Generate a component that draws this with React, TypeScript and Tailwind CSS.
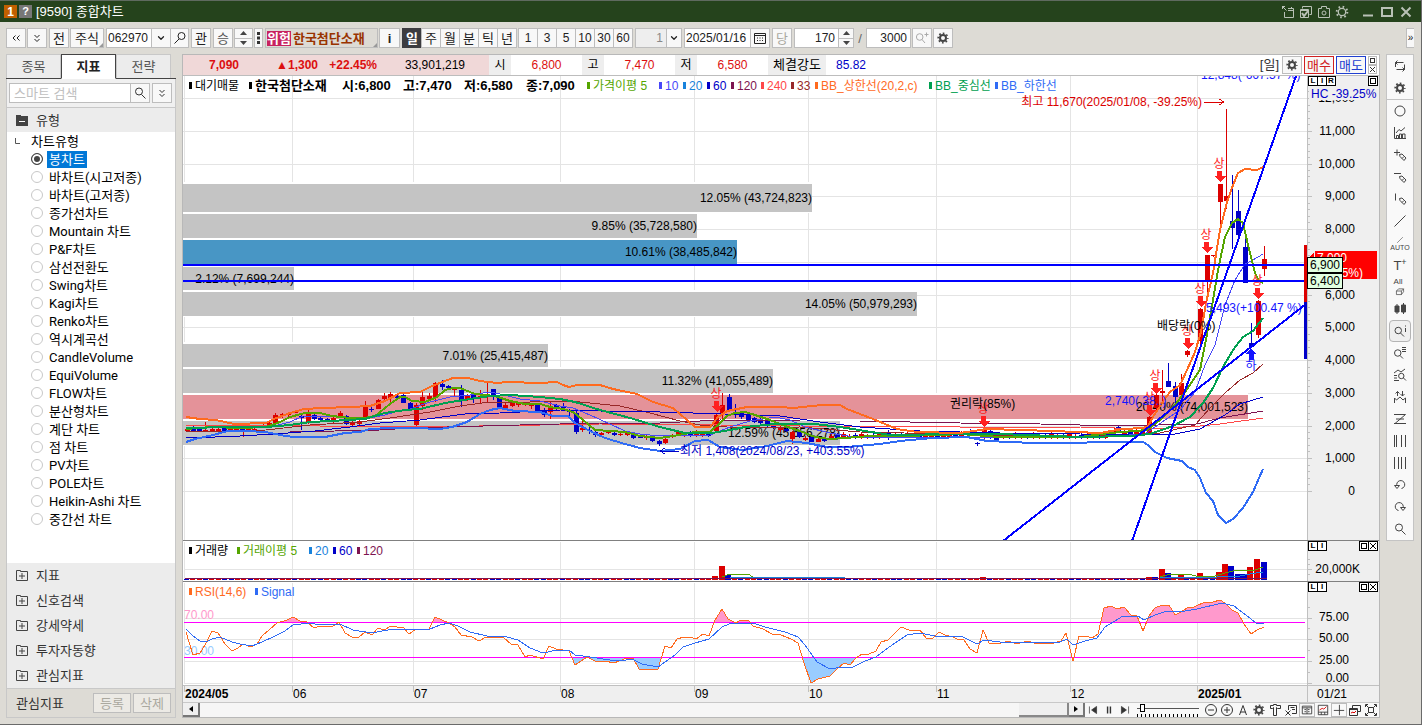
import type { ReactNode } from 'react'
import { ChevronDown } from 'lucide-react'
import { clsx } from 'clsx'

const RED = '#dc0000'
const NAVY = '#0000c8'

const chartTypes = [
  '봉차트', '바차트(시고저종)', '바차트(고저종)', '종가선차트', 'Mountain 차트', 'P&F차트', '삼선전환도',
  'Swing차트', 'Kagi차트', 'Renko차트', '역시계곡선', 'CandleVolume', 'EquiVolume', 'FLOW차트',
  '분산형차트', '계단 차트', '점 차트', 'PV차트', 'POLE차트', 'Heikin-Ashi 차트', '중간선 차트',
]

const monthLines = [184, 292, 413, 560, 694, 808, 936, 1070, 1197]

// volume profile: y, height, right edge, label, fill
const profile: [number, number, number, string, string][] = [
  [184, 28, 812, '12.05% (43,724,823)', '#c4c4c4'],
  [214, 24, 697, '9.85% (35,728,580)', '#c4c4c4'],
  [240, 24, 737, '10.61% (38,485,842)', '#4896c5'],
  [267, 23, 294, '2.12% (7,699,244)', '#c4c4c4'],
  [292, 24, 917, '14.05% (50,979,293)', '#c4c4c4'],
  [344, 23, 548, '7.01% (25,415,487)', '#c4c4c4'],
  [369, 24, 773, '11.32% (41,055,489)', '#c4c4c4'],
  [395, 24, 1248, '20.40% (74,001,523)', '#e49299'],
  [421, 24, 840, '12.59% (45,656,278)', '#c4c4c4'],
]

// candles: x, high, low, body top, body bottom, 1 = up / 0 = down
const candles: number[][] = [
  [199, 428, 432, 429, 431, 0], [205, 422, 432, 430, 432, 1], [212, 428, 431, 429, 431, 1], [243, 430, 437, 431, 432, 1],
  [263, 424, 428, 425, 427, 1], [269, 420, 427, 423, 426, 1], [275, 413, 426, 415, 424, 1], [282, 413, 418, 414, 416, 1],
  [288, 412, 418, 413, 415, 1], [295, 410, 413, 411, 413, 1], [301, 414, 430, 416, 418, 0], [308, 409, 424, 414, 422, 1],
  [314, 414, 420, 415, 419, 0], [320, 417, 421, 418, 420, 0], [327, 418, 422, 419, 421, 0], [333, 417, 423, 418, 422, 1],
  [340, 411, 417, 413, 416, 1], [346, 415, 425, 416, 424, 0], [352, 420, 427, 422, 425, 1], [359, 419, 426, 421, 424, 1],
  [365, 401, 420, 406, 419, 1], [371, 406, 412, 409, 410, 0], [378, 399, 409, 400, 409, 1], [384, 393, 401, 396, 399, 1],
  [390, 392, 402, 394, 398, 1], [397, 395, 399, 396, 398, 0], [403, 394, 403, 395, 403, 0], [410, 402, 410, 403, 409, 0],
  [416, 403, 427, 405, 425, 1], [422, 391, 410, 397, 406, 1], [429, 393, 401, 396, 399, 1], [435, 382, 402, 383, 398, 1],
  [442, 380, 390, 384, 387, 0], [448, 385, 389, 386, 388, 0], [454, 388, 397, 389, 390, 1], [461, 385, 407, 390, 400, 0],
  [467, 394, 401, 395, 400, 1], [473, 393, 403, 395, 398, 0], [480, 390, 404, 396, 398, 1], [487, 383, 402, 395, 397, 1],
  [493, 389, 400, 389, 396, 0], [499, 397, 409, 398, 408, 0], [505, 403, 408, 405, 408, 1], [512, 402, 407, 403, 406, 1],
  [518, 402, 407, 403, 405, 1], [525, 402, 406, 403, 405, 1], [531, 403, 409, 404, 406, 1], [537, 404, 412, 405, 411, 0],
  [544, 408, 417, 410, 415, 0], [550, 402, 419, 407, 412, 1], [556, 404, 411, 405, 409, 0], [563, 403, 410, 406, 408, 0],
  [569, 409, 416, 410, 412, 0], [576, 411, 434, 413, 432, 0], [582, 421, 432, 428, 430, 1], [589, 426, 434, 430, 431, 0],
  [595, 429, 437, 432, 435, 0], [601, 432, 436, 433, 435, 1], [608, 431, 434, 431, 433, 1], [614, 432, 436, 433, 435, 0],
  [620, 433, 436, 434, 435, 1], [627, 432, 436, 433, 435, 1], [633, 434, 439, 435, 438, 0], [640, 436, 438, 437, 438, 0],
  [646, 434, 440, 437, 438, 1], [652, 437, 442, 438, 441, 0], [659, 440, 446, 441, 444, 0], [665, 438, 444, 439, 443, 1],
  [672, 434, 438, 435, 437, 1], [678, 430, 436, 432, 435, 1],
  [716, 414, 432, 415, 431, 1], [722, 393, 421, 405, 414, 1], [729, 394, 411, 397, 410, 0], [735, 404, 418, 412, 415, 0],
  [741, 412, 419, 413, 417, 0], [748, 413, 422, 415, 420, 0], [754, 417, 423, 418, 422, 0], [760, 418, 425, 420, 423, 0],
  [767, 420, 427, 421, 425, 0], [773, 423, 429, 424, 427, 0], [780, 425, 432, 427, 430, 1], [786, 427, 432, 429, 431, 0],
  [792, 431, 444, 432, 439, 1], [799, 431, 438, 432, 437, 0], [805, 436, 441, 438, 440, 1], [811, 435, 442, 437, 442, 0],
  [818, 438, 442, 439, 442, 1], [824, 438, 442, 439, 441, 0],
  [888, 430, 440, 433, 437, 0], [970, 429, 436, 431, 434, 0], [977, 442, 446, 443, 444, 0], [984, 427, 439, 429, 438, 1],
  [990, 430, 439, 431, 438, 0], [996, 436, 441, 437, 440, 0], [1114, 428, 434, 430, 433, 1], [1118, 426, 433, 427, 431, 0],
  [1149, 416, 434, 417, 434, 1], [1156, 394, 410, 395, 408, 1], [1162, 370, 402, 391, 393, 1], [1168, 363, 387, 381, 387, 0],
  [1175, 382, 405, 386, 397, 0], [1181, 374, 397, 383, 395, 1], [1187, 350, 357, 351, 355, 1], [1200, 308, 345, 309, 341, 1],
  [1207, 255, 292, 255, 281, 1], [1213, 255, 257, 255, 256, 1], [1220, 184, 225, 184, 202, 1], [1226, 109, 209, 196, 201, 1],
  [1232, 175, 249, 221, 228, 0], [1238, 190, 240, 211, 235, 0], [1245, 239, 283, 247, 283, 0], [1251, 323, 347, 343, 347, 0],
  [1258, 300, 338, 301, 335, 1], [1264, 246, 276, 259, 269, 1],
]

// quiet stretches where the bars barely move
const quiet: [number, number, number][] = [[187, 194, 429], [218, 258, 429], [684, 710, 434], [831, 884, 436], [895, 966, 435], [1003, 1108, 436], [1124, 1146, 432]]
quiet.forEach(([from, to, y]) => {
  for (let x = from, i = 0; x <= to; x += 6, i++) {
    const d = (i * 7) % 3
    candles.push([x, y - 2 - d, y + 3, y - d, y + 2, i % 3 === 1 ? 0 : 1])
  }
})

// stroke, width, points
const averages: [string, number, string][] = [
  ['#ff4848', 1, '186,425 320,426 420,427 600,424 720,425 800,426 960,427 1080,427 1150,429 1200,426 1220,424 1263,418'],
  ['#7d1450', 1, '290,432 380,430 410,428 520,425 600,423 660,423 720,420 800,421 860,421 960,423 1040,424 1120,426 1197,424 1220,418 1263,411'],
  ['#982828', 1, '186,432 266,430 310,425 360,422 390,418 430,412 460,406 490,402 530,402 570,401 620,406 650,413 680,421 700,425 740,428 800,427 860,432 1080,437 1160,433 1195,425 1210,408 1225,393 1240,380 1253,373 1263,364'],
  ['#0000c8', 1, '186,437 215,437 240,436 275,434 315,431 350,427 380,423 420,420 465,414 500,413 560,410 600,411 660,412 725,414 780,416 820,422 860,427 920,431 1000,433 1080,434 1140,435 1175,434 1200,429 1225,415 1240,404 1263,397'],
  ['#4848f8', 1, '186,427 266,428 290,422 303,416 340,417 370,418 385,415 395,412 410,409 430,402 450,397 470,395 490,392 500,394 520,399 540,401 560,406 573,408 590,415 610,424 625,431 640,434 660,436 710,435 730,427 750,421 775,417 790,420 805,427 830,433 860,438 890,437 960,437 1080,438 1145,434 1165,420 1180,410 1195,392 1205,365 1215,345 1225,305 1235,280 1245,264 1253,260 1263,254'],
  ['#55a500', 2, '186,429 212,427 240,428 266,427 280,422 290,417 305,413 320,413 332,416 350,418 365,418 375,416 390,404 400,397 405,397 412,401 425,402 437,397 445,390 453,388 460,388 475,394 495,396 510,401 525,404 540,404 550,407 563,409 573,412 582,419 595,430 625,432 640,436 660,438 673,436 695,432 710,432 720,423 727,416 735,413 745,412 755,415 770,420 785,426 800,431 815,437 830,439 845,438 870,436 900,436 940,435 960,434 1000,437 1040,437 1080,437 1110,433 1147,430 1160,420 1175,405 1185,392 1200,370 1206,340 1213,300 1218,270 1225,237 1232,223 1238,219 1243,223 1248,245 1255,273 1259,281 1263,283'],
  ['#00a050', 2, '186,428 230,427 266,427 290,425 310,422 330,421 365,419 385,413 405,410 420,409 445,403 470,399 490,396 510,395 540,397 560,399 575,402 600,410 630,418 640,421 660,427 685,433 712,433 730,430 745,427 775,424 815,424 840,427 865,431 890,435 960,434 1000,434 1080,437 1130,436 1150,434 1173,426 1190,417 1203,403 1213,388 1223,367 1233,350 1243,337 1253,331 1263,318'],
  ['#ff6a1e', 2, '186,417 200,419 216,420 234,424 266,423 274,419 290,413 304,409 322,408 350,407 370,406 385,401 400,393 420,392 430,387 442,382 453,378 468,378 480,381 497,383 508,382 540,383 557,382 563,385 569,387 577,385 600,385 613,389 637,394 653,402 673,408 687,420 695,427 710,427 718,417 727,411 747,407 780,407 793,408 822,405 840,405 847,409 873,419 897,429 917,432 960,433 987,429 1053,431 1100,433 1123,429 1143,428 1148,426 1153,417 1162,403 1170,392 1180,385 1187,370 1195,352 1201,332 1206,303 1213,273 1220,230 1227,202 1233,185 1238,173 1245,169 1257,170 1263,167'],
  ['#2f6bf5', 2, '186,442 195,439 213,435 228,431 245,431 266,432 280,435 293,437 325,437 345,433 360,432 370,429 390,428 415,428 440,429 452,427 467,422 480,414 490,410 500,408 515,411 540,412 553,416 568,416 575,423 590,431 605,438 625,444 640,448 660,451 680,449 695,441 708,440 720,447 743,450 767,446 787,441 807,443 827,447 847,447 880,444 900,441 933,438 967,437 987,441 1033,443 1143,442 1148,445 1155,452 1167,458 1182,461 1188,467 1195,470 1200,478 1206,493 1213,501 1218,515 1226,523 1233,519 1243,508 1253,492 1263,469'],
]

const rsi =
  '186,632 193,655 200,653 205,645 212,631 218,633 225,644 232,651 238,648 243,644 251,647 257,644 262,636 270,629 277,623 287,620 293,617 300,621 307,622 314,628 320,626 326,627 333,626 339,622 345,633 352,637 359,637 365,632 372,635 378,628 384,630 391,626 397,627 403,627 409,634 416,629 429,629 435,617 442,620 449,623 455,627 461,635 472,637 479,641 486,637 496,637 504,638 511,644 518,645 525,657 530,655 543,659 549,646 556,649 569,651 575,665 587,657 595,661 605,661 614,663 627,658 633,658 639,669 658,669 665,646 671,648 677,639 684,637 690,637 696,639 703,634 709,636 715,620 722,609 728,619 736,623 741,620 749,621 753,626 763,629 772,634 781,635 791,639 798,643 804,663 811,683 818,679 830,676 837,669 844,663 850,665 856,658 862,654 869,654 876,651 881,642 888,640 901,627 909,630 920,630 926,638 932,639 939,632 945,635 953,637 957,639 964,640 970,649 977,653 983,630 989,643 997,644 1009,641 1016,644 1028,641 1034,643 1054,643 1061,641 1066,633 1073,661 1079,636 1086,636 1092,638 1098,634 1104,608 1111,606 1117,609 1124,607 1131,615 1137,616 1143,631 1149,616 1155,608 1162,605 1169,605 1175,615 1181,612 1187,608 1194,607 1205,602 1213,602 1220,600 1225,603 1232,610 1238,613 1244,624 1251,634 1257,630 1264,627'
const signal =
  '186,629 193,636 200,641 206,642 212,639 220,637 232,642 240,644 252,646 262,642 275,636 285,631 293,625 310,623 320,625 340,624 353,630 372,633 382,631 395,629 403,629 415,630 430,629 440,625 449,623 458,626 470,632 487,636 507,637 518,640 530,648 543,653 557,650 569,650 575,655 590,657 610,660 620,661 632,659 642,664 658,667 665,662 675,655 683,647 695,643 709,639 722,627 729,624 753,623 765,627 785,632 798,637 805,645 817,662 830,669 842,667 853,667 865,661 876,657 885,650 895,643 907,635 920,633 935,636 950,636 963,637 977,644 984,640 1000,642 1060,642 1067,639 1073,645 1085,641 1097,638 1105,627 1123,616 1138,616 1144,620 1155,615 1167,611 1185,611 1197,609 1222,603 1234,606 1246,615 1256,623 1264,623'

// x, top, 1 = up / 0 = down
const volumes: number[][] = [
  [715, 576, 1], [722, 566, 1], [728, 575, 0], [983, 577, 1], [1149, 577, 1], [1155, 577, 0], [1162, 569, 1], [1168, 573, 0],
  [1181, 575, 1], [1200, 573, 1], [1219, 572, 1], [1225, 564, 1], [1231, 566, 0], [1238, 574, 0], [1244, 574, 0],
  [1250, 567, 1], [1257, 559, 1], [1264, 562, 0],
]

const limitUps: [number, number][] = [[716, 401], [983, 416], [1149, 405], [1155, 383], [1187, 338], [1200, 296], [1206, 242], [1219, 171], [1257, 288]]

/* ---------- icons ---------- */

function Icon({ d, size = 14, sw = 1, fill = 'none', children }: { d?: string; size?: number; sw?: number; fill?: string; children?: ReactNode }) {
  return (
    <svg width={size} height={size} viewBox="0 0 14 14" fill={fill} stroke="currentColor" strokeWidth={sw} className="shrink-0" aria-hidden="true">
      {d && <path d={d} />}
      {children}
    </svg>
  )
}

function Gear() {
  return (
    <span className="text-[#444]">
      <Icon>
        <circle cx="7" cy="7" r="3" strokeWidth="2" />
        <circle cx="7" cy="7" r="4.800" strokeWidth="1.600" strokeDasharray="1.700 2.070" strokeDashoffset="0.850" />
      </Icon>
    </span>
  )
}

const ICONS = {
  search: 'M9.5 5.5a3.5 3.5 0 1 1-7 0a3.5 3.5 0 0 1 7 0M8.5 8.5L12.5 12.5',
  searchFlip: 'M12 5a3.5 3.5 0 1 1-7 0a3.5 3.5 0 0 1 7 0M6 8L1.5 12.5',
  dbLeft: 'M6.5 4.5L4 7l2.5 2.5M10.5 4.5L8 7l2.5 2.5',
  dbDown: 'M4.5 4L7 6.5L9.5 4M4.5 8L7 10.5L9.5 8',
  pencil: 'M6.5 6.5l2.500-.5l4 4l-2 2.500l-4-4zM9 10.500l2-2',
}

const sideTools: ReactNode[] = [
  <Icon><circle cx="7" cy="7" r="5" /></Icon>,
  <Icon d="M1.500 1v11.500H13M3.500 12V9.500h2V12M6.500 12V8h2v4M9.500 12V8h2.500v4M3 7l3-3.500l2 1.500l4-3.500" />,
  <Icon d={'M1 4.500h6M4 1.500v6' + ICONS.pencil} />,
  <Icon d={'M1 3.500h7' + ICONS.pencil} />,
  <Icon d={'M2.500 1.500v7' + ICONS.pencil} />,
  <Icon d="M1.500 12.500L12.500 1.500" />,
  <span className="flex flex-col items-center text-[7px] leading-[7px]"><Icon size={8} d="M2 12L12 2" />AUTO</span>,
  <span className="text-[13px] leading-none">T<sup className="text-[9px]">+</sup></span>,
  <span className="flex flex-col items-center text-[8px] leading-[8px]"><span className="mr-1">All</span><Icon size={10} d="M2 7h7v5H2zM2 7l3-3h7L9 7M12 4v4l-3 4" /></span>,
  <Icon d="M4 2v10M10.500 1v11"><path d="M2 4h4v6H2zM8.500 3h4v7h-4z" fill="currentColor" /></Icon>,
  <Icon d="M8.500 6.500a3.200 3.200 0 1 1-6.500 0a3.200 3.200 0 0 1 6.500 0M7.500 9L11 12.500M12.500 4v4M12.500 1.500v1" />,
  <Icon d="M8 7a3.200 3.200 0 1 1-6.500 0a3.200 3.200 0 0 1 6.500 0M7 9.500L10 12.500M9 1.500h4M9 3.500h4M9 5.500h4" />,
  <Icon d="M1 5l4-3l3 2l4-3M1 7.500h3M1 10h3M1 12.500h5M11 8a2.700 2.700 0 1 1-5.400 0a2.700 2.700 0 0 1 5.400 0M10.500 10L13 12.500" />,
  <Icon d="M1.500 13V8l2 2l3.500-3l3 3l2.500-2v5M4.500 6V1.500M2.500 3.500l2-2l2 2M9.500 1v5M7.500 4l2 2l2-2" />,
  <Icon d="M1 2.500h11.500L2 11.500M3 7h8M1 11.500h12" />,
  <Icon d="M1.500 1v12M3.500 1v12M8.500 1v12M12.500 1v12" />,
  <Icon d="M1.500 1v12M5.500 1v12M8.500 1v12M12.500 1v12" />,
  <Icon d="M4 8A4 4 0 1 1 8.500 10.500M1.500 7.500h5L4 10.500z" />,
  <Icon d="M10 8A4 4 0 1 0 5.500 10.500M7.500 7.500h5L10 10.500z" />,
  <Icon d={ICONS.search} />,
]

/* ---------- shared bits ---------- */

function Btn({ className, children, label }: { className?: string; children?: ReactNode; label?: string }) {
  return (
    <button type="button" aria-label={label} className={clsx('flex h-5 shrink-0 items-center justify-center overflow-hidden border border-[#bdbdbd] bg-[#f8f8f8] text-[13px] leading-none', className)}>
      {children}
    </button>
  )
}

function Field({ label, value, className }: { label: string; value: string; className?: string }) {
  return <input type="text" aria-label={label} defaultValue={value} className={clsx('h-5 min-w-0 shrink-0 border border-[#bdbdbd] px-[3px] text-[12px] leading-none outline-none', className)} />
}

function Spinner({ className }: { className?: string }) {
  return (
    <div className={clsx('flex h-5 shrink-0 flex-col border border-[#bdbdbd] bg-[#f8f8f8]', className)}>
      <button type="button" aria-label="증가" className="flex flex-1 items-center justify-center border-b border-[#bdbdbd]">
        <svg width="7" height="4"><path d="M0 4L3.500 0L7 4z" fill="#444" /></svg>
      </button>
      <button type="button" aria-label="감소" className="flex flex-1 items-center justify-center">
        <svg width="7" height="4"><path d="M0 0L3.500 4L7 0z" fill="#444" /></svg>
      </button>
    </div>
  )
}

// grey notch in the corner of buttons that open a menu
function MenuCorner() {
  return <svg width="4" height="4" className="shrink-0 self-end"><path d="M4 0v4H0z" fill="#999" /></svg>
}

function Legend({ x, y, color, text, bold }: { x: number; y: number; color: string; text: string; bold?: boolean }) {
  return (
    <g fill={color}>
      <rect x={x - 6} y={y - 4} width="3" height="7" />
      <text x={x} y={y + 4} fontSize={bold ? 13 : 12} fontWeight={bold ? 700 : 400}>{text}</text>
    </g>
  )
}

function PaneButtons({ tags, close }: { tags: string[]; close?: boolean }) {
  const box = 'flex h-[10px] w-[10px] items-center justify-center border border-black bg-white text-[8px] leading-none font-bold -ml-px'
  return (
    <div className="absolute top-0 right-0 flex w-[72px] justify-between pr-px pl-[2px]">
      <div className="flex">
        {tags.map(t => <button key={t} type="button" className={box}>{t}</button>)}
      </div>
      <div className="flex">
        <button type="button" aria-label="최대화" className={box}><span className="h-[6px] w-[6px] border border-black" /></button>
        {close && <button type="button" aria-label="닫기" className={box}><svg width="8" height="8" stroke="#000"><path d="M1 1l6 6M7 1l-6 6" /></svg></button>}
      </div>
    </div>
  )
}

/* ---------- title + toolbar ---------- */

function TitleBar() {
  return (
    <header className="flex h-[22px] items-center border-t border-[#5f6a5f] bg-[#25431c] pr-[8px] pl-1 text-white">
      <span className="flex h-[13px] w-[13px] items-center justify-center bg-[#c06000] text-[12px] leading-none font-bold">1</span>
      <span className="ml-[2px] flex h-[13px] w-[13px] items-center justify-center bg-[#777] text-[11px] leading-none font-bold">?</span>
      <h1 className="ml-1 text-[13px] leading-none">[9590] 종합차트</h1>
      <div className="ml-auto flex items-center gap-1 text-[#b9c1b6]">
        <button type="button" aria-label="창 분리"><Icon d="M1 1.500h3M1.500 1v3M1.500 1.500l4 4M3.500 7v5.500h9V3.500H7M7 5.500h5.500M10.500 2v2" /></button>
        <button type="button" aria-label="복사"><Icon d="M3.500 3.500v-2h9v8h-2M1.500 4.500h8v8h-8zM1.500 5.500h8"><path d="M3 8l2 3l4-5" strokeWidth="2" /></Icon></button>
        <button type="button" aria-label="캡처"><Icon d="M1.500 3.500h3v-2h5v2h3v9h-11zM9 8a2 2 0 1 1-4 0a2 2 0 0 1 4 0" /></button>
        <button type="button" aria-label="설정"><Icon><circle cx="7" cy="7" r="3.700" strokeWidth="1.300" /><circle cx="7" cy="7" r="5.300" strokeWidth="2" strokeDasharray="1.600 2.560" /></Icon></button>
        <button type="button" aria-label="최소화" className="ml-2"><Icon><path d="M2 10.500h10" strokeWidth="2" /></Icon></button>
        <button type="button" aria-label="최대화" className="ml-px"><Icon><path d="M2 3h10v8H2z" strokeWidth="2" /></Icon></button>
        <button type="button" aria-label="닫기" className="ml-px"><Icon><path d="M2.500 2.500l9 9M11.500 2.500l-9 9" strokeWidth="2" /></Icon></button>
      </div>
    </header>
  )
}

function Toolbar() {
  return (
    <div className="flex h-8 items-center gap-[2px] overflow-hidden pr-[7px] pl-[6px] text-[#222]">
      <div className="flex gap-px">
        <Btn className="w-5" label="이전"><Icon d={ICONS.dbLeft} /></Btn>
        <Btn className="w-5" label="펼치기"><Icon d={ICONS.dbDown} /></Btn>
      </div>
      <div className="flex gap-px">
        <Btn className="w-5">전</Btn>
        <Btn className="w-[34px] justify-end!">주식<MenuCorner /></Btn>
      </div>
      <div className="flex">
        <Field label="종목코드" value="062970" className="w-[46px] bg-white px-px!" />
        <Btn className="-ml-px w-5" label="목록"><ChevronDown size={10} strokeWidth={3} /></Btn>
        <Btn className="-ml-px w-[19px]" label="종목 찾기"><Icon d={ICONS.searchFlip} /></Btn>
      </div>
      <Btn className="w-5">관</Btn>
      <div className="flex gap-px">
        <Btn className="w-5 text-[#555]">승</Btn>
        <Spinner className="w-[19px]" />
        <Btn className="w-[9px]" label="더보기"><svg width="3" height="12"><path d="M0 0h3v3H0zM0 4.500h3v3H0zM0 9h3v3H0z" fill="#333" /></svg></Btn>
      </div>
      <div className="flex gap-px">
        <Btn className="w-[113px] justify-start! bg-[#dddbd5]! pl-px font-bold">
          <span className="bg-[#c8215f] py-px text-white">위험</span>
          <span className="mr-auto ml-[2px] text-[#993300]">한국첨단소재</span>
          <MenuCorner />
        </Btn>
        <Btn className="w-[21px] font-bold">i</Btn>
      </div>
      <div className="flex gap-px">
        <div className="flex">
          {['일', '주', '월', '분', '틱', '년'].map((p, i) => (
            <Btn key={p} className={clsx('w-5', i === 0 ? 'border-[#3c3c40]! bg-[#3c3c40]! font-bold text-white' : '-ml-px')}>{p}</Btn>
          ))}
        </div>
        <div className="flex">
          {['1', '3', '5', '10', '30', '60'].map((p, i) => (
            <Btn key={p} className={clsx('w-5 text-[12px]!', i > 0 && '-ml-px')}>{p}</Btn>
          ))}
        </div>
      </div>
      <div className="flex">
        <Field label="주기" value="1" className="w-8 bg-[#eee] text-right text-[#888]" />
        <Btn className="-ml-px w-4" label="주기 목록"><ChevronDown size={10} strokeWidth={3} /></Btn>
      </div>
      <div className="flex">
        <Field label="날짜" value="2025/01/16" className="w-[67px] bg-white px-px!" />
        <Btn className="-ml-px w-5" label="달력"><Icon d="M1.500 2.500h11v10h-11zM1.500 4.500h11M4 7h1M6.500 7h1M9 7h1M4 9.500h1M6.500 9.500h1M9 9.500h1" /></Btn>
      </div>
      <Btn className="w-5 text-[#aaa89f]">당</Btn>
      <div className="flex items-center">
        <Field label="표시 봉수" value="170" className="w-[45px] bg-white text-right" />
        <Spinner className="-ml-px w-4" />
        <span className="w-3 text-center text-[13px] leading-none text-[#666]">/</span>
        <Field label="전체 봉수" value="3000" className="w-[45px] bg-white text-right" />
        <Btn className="ml-px w-5 text-[#aaa]" label="확대"><Icon d="M8 6a3.300 3.300 0 1 1-6.600 0a3.300 3.300 0 0 1 6.600 0M7 8.500L10 12M9.500 3.500h4M11.500 1.500v4" /></Btn>
        <Btn className="ml-px w-5" label="설정"><Gear /></Btn>
      </div>
      <Btn className="ml-auto w-2 border-r-0 text-[10px]!">»</Btn>
    </div>
  )
}

/* ---------- left panel ---------- */

function FolderIcon({ open }: { open?: boolean }) {
  return open ? (
    <svg width="12" height="11"><path d="M0 0h5v1h7v10H0z" fill="#444" /><path d="M3 6h6v1H3z" fill="#fff" /></svg>
  ) : (
    <svg width="12" height="11" fill="none" stroke="#444"><path d="M.5 .5h4v1h7v9h-11zM3 6h6M6 3v6" /></svg>
  )
}

function Sidebar() {
  return (
    <aside className="flex w-[170px] shrink-0 flex-col text-[13px] leading-none text-[#333]">
      <div className="flex h-[25px] border-b border-[#444] pr-[5px]" role="tablist">
        {['종목', '지표', '전략'].map((t, i) => (
          <button key={t} type="button" role="tab" aria-selected={i === 1}
            className={clsx('flex-1 border', i === 1 ? 'h-[25px] border-[#444] border-b-white bg-white font-bold text-[#222]' : 'h-6 border-[#c8c8c8] border-b-0 bg-[#ececec] text-[#555]')}>
            {t}
          </button>
        ))}
      </div>
      <div className="flex border-x border-[#c8c8c8] bg-[#f0f0f0] py-1 pl-[2px]">
        <input type="text" aria-label="스마트 검색" placeholder="스마트 검색" className="h-5 w-[122px] border border-[#bdbdbd] bg-white px-1 text-[13px] outline-none placeholder:text-[#c0c0c0]" />
        <Btn className="-ml-px w-5" label="검색"><Icon d={ICONS.search} /></Btn>
        <Btn className="ml-[2px] w-5" label="펼치기"><Icon d={ICONS.dbDown} /></Btn>
      </div>
      <div className="flex flex-1 flex-col border border-[#c8c8c8] bg-white">
        <button type="button" className="flex h-6 items-center gap-2 bg-[#ececec] pl-[9px]"><FolderIcon open />유형</button>
        <fieldset className="text-black [font-family:Roboto,'Noto_Sans_CJK_KR',sans-serif]">
          <legend className="flex h-[18px] items-center pl-2"><svg width="6" height="6" fill="none" stroke="#555" className="mr-[10px]"><path d="M.5 0v5.500H5" /></svg>차트유형</legend>
          {chartTypes.map((t, i) => (
            <label key={t} className="flex h-[18px] items-center gap-1 pl-6">
              <input type="radio" name="chartType" defaultChecked={i === 0}
                className="h-3 w-3 shrink-0 appearance-none rounded-full border border-[#c8c8c8] bg-white checked:border-[#444] checked:bg-[#444] checked:shadow-[inset_0_0_0_2px_#fff]" />
              <span className={clsx('flex h-[17px] items-center px-[2px]', i === 0 && 'bg-[#0078d7] text-white')}>{t}</span>
            </label>
          ))}
        </fieldset>
        <div className="mt-auto bg-[#ececec]">
          {['지표', '신호검색', '강세약세', '투자자동향', '관심지표'].map(t => (
            <button key={t} type="button" className="flex h-[25px] w-full items-center gap-2 pl-[9px]"><FolderIcon />{t}</button>
          ))}
        </div>
        <div className="flex h-[29px] items-center border-t border-[#c8c8c8] bg-[#dddbd5] pr-1 pl-[9px]">
          관심지표
          <Btn className="ml-auto w-[38px] bg-[#eceae5]! text-[#aaa89f]">등록</Btn>
          <Btn className="ml-[2px] w-[38px] bg-[#eceae5]! text-[#aaa89f]">삭제</Btn>
        </div>
      </div>
    </aside>
  )
}

/* ---------- charts ---------- */

function QuoteRow() {
  return (
    <div className="flex h-[21px] items-stretch overflow-hidden border-b border-[#bdbdbd] bg-white text-[12px] leading-5 whitespace-nowrap text-black">
      <div className="flex w-[306px] shrink-0 bg-[#f0d8d8] font-bold text-[#dc0f0f]">
        <span className="w-14 text-right">7,090</span>
        <span className="w-[79px] text-right">▲1,300</span>
        <span className="w-[59px] text-right">+22.45%</span>
        <span className="w-[88px] text-right font-normal text-black">33,901,219</span>
      </div>
      {[['시', '6,800'], ['고', '7,470'], ['저', '6,580']].map(([k, v]) => (
        <div key={k} className="flex shrink-0">
          <span className="w-[22px] bg-[#eee] text-center">{k}</span>
          <span className="w-[71px] text-center text-[#dc0f0f]">{v}</span>
        </div>
      ))}
      <span className="w-[58px] shrink-0 bg-[#eee] text-center text-[13px]">체결강도</span>
      <span className="ml-[10px] text-[#0000c8]">85.82</span>
      <div className="ml-auto flex items-center gap-[2px] pr-[2px]">
        <span className="mr-px text-[13px] text-[#333]">[일]</span>
        <Btn className="h-[18px]! w-5" label="차트 설정"><Gear /></Btn>
        <Btn className="h-[18px]! w-[30px] border-[#d02020]! text-[#d02020]">매수</Btn>
        <Btn className="h-[18px]! w-[30px] border-[#2040d0]! text-[#2040d0]">매도</Btn>
        <div className="flex flex-col">
          <button type="button" aria-label="확대" className="flex h-[9px] w-[9px] items-center justify-center border border-[#bbb]"><span className="h-[5px] w-[5px] border border-[#333]" /></button>
          <button type="button" aria-label="닫기" className="flex h-[9px] w-[9px] items-center justify-center border border-[#bbb]"><svg width="5" height="5" stroke="#333"><path d="M0 0l5 5M5 0L0 5" /></svg></button>
        </div>
      </div>
    </div>
  )
}

function AxisColumn({ top, height }: { top: number; height: number }) {
  return (
    <g>
      <rect x="1307" y={top} width="72" height={height} fill="#efefef" />
      <rect x="1307" y={top} width="1" height={height} fill="#c0c0c0" />
    </g>
  )
}

function PriceChart() {
  const ticks = Array.from({ length: 13 }, (_, k) => ({ v: k * 1000, y: Math.round(491 - k * 32.75) }))
  return (
    <section className="relative">
      <svg viewBox="183 76 1196 464" className="block w-full" fontSize="12" shapeRendering="crispEdges">
        <rect x="183" y="76" width="1124" height="464" fill="#fff" />
        {monthLines.map(x => <rect key={x} x={x} y="76" width="1" height="464" fill="#e4e4e4" />)}
        {ticks.map(t => <rect key={t.v} x="183" y={t.y} width="1124" height="1" fill="#e4e4e4" />)}
        {profile.map(([y, h, r, , fill]) => (
          <g key={y}>
            <rect x="183" y={y - 2} width={r - 183} height={h + 3} fill="#fff" />
            <rect x="183" y={y} width={r - 183} height={h} fill={fill} />
          </g>
        ))}
        {profile.map(([y, h, r, label]) => <text key={y} x={r} y={y + h / 2 + 4} textAnchor="end">{label}</text>)}
        {candles.map(([x, hi, lo, top, bot, up], i) => (
          <g key={i} fill={up ? RED : NAVY}>
            <rect x={x} y={hi} width="1" height={lo - hi} />
            <rect x={x - 2} y={top} width="5" height={Math.max(1, bot - top)} />
          </g>
        ))}
        {averages.map(([stroke, w, points]) => <polyline key={stroke} points={points} fill="none" stroke={stroke} strokeWidth={w} />)}

        <g fill="#ff2020">
          {limitUps.map(([x, y]) => (
            <g key={x}>
              <path d={`M${x - 2} ${y}h5v5h4l-6 6l-6-6h3z`} />
              <text x={x} y={y - 3} textAnchor="middle">상</text>
            </g>
          ))}
        </g>
        <g fill="#1414ff">
          <path d="M1251 349l6 5h-3v6h-5v-6h-4z" />
          <text x="1251" y="370" textAnchor="middle">하</text>
          <text x="1201" y="79">12,848(-667.57 %)</text>
          <text x="1206" y="312">5,493(+100.47 %)</text>
          <text x="1105" y="405">2,740( 38..)</text>
        </g>
        <text x="950" y="408">권리락(85%)</text>
        <text x="1157" y="330">배당락(0%)</text>
        <text x="1202" y="106" fill="#dc0000" textAnchor="end">최고 11,670(2025/01/08, -39.25%)</text>
        <path d="M1204 102h20M1219 99l5 3l-5 3" stroke="#dc0000" fill="none" />
        <text x="680" y="455" fill={NAVY}>최저 1,408(2024/08/23, +403.55%)</text>
        <path d="M679 451h-19M665 448l-5 3l5 3" stroke={NAVY} fill="none" />

        <g stroke="#0000ff" strokeWidth="2">
          <path d="M183 265H1306M183 281H1306M1003 541L1306 304M1132 541L1296 76" />
        </g>
        <rect x="1304" y="245" width="3" height="57" fill={RED} />
        <rect x="1304" y="302" width="3" height="57" fill={NAVY} />

        <Legend x={195} y={86} color="#000" text="대기매물" />
        <Legend x={255} y={86} color="#000" text="한국첨단소재" bold />
        <g fontSize="13" fontWeight="700">
          <text x="342" y="90">시:6,800</text>
          <text x="403" y="90">고:7,470</text>
          <text x="464" y="90">저:6,580</text>
          <text x="526" y="90">종:7,090</text>
        </g>
        <Legend x={593} y={86} color="#55a500" text="가격이평 5" />
        <Legend x={665} y={86} color="#4848f8" text="10" />
        <Legend x={689} y={86} color="#1882dc" text="20" />
        <Legend x={713} y={86} color="#0000c8" text="60" />
        <Legend x={737} y={86} color="#7d1450" text="120" />
        <Legend x={767} y={86} color="#ff4848" text="240" />
        <Legend x={797} y={86} color="#982828" text="33" />
        <Legend x={821} y={86} color="#ff6a1e" text="BB_상한선(20,2,c)" />
        <Legend x={935} y={86} color="#00a050" text="BB_중심선" />
        <Legend x={1001} y={86} color="#2f6bf5" text="BB_하한선" />

        <AxisColumn top={76} height={464} />
        {ticks.map(t => (
          <g key={t.v}>
            {[0, 7, 13, 20, 26].map(o => <rect key={o} x="1308" y={t.y - o} width={o ? 2 : 4} height="1" fill="#c0c0c0" />)}
            <text x="1355" y={t.y + 4} textAnchor="end">{t.v.toLocaleString('en-US')}</text>
          </g>
        ))}
        <rect x="1309" y="85" width="68" height="15" fill="#efefef" />
        <text x="1311" y="98" fill={NAVY}>HC -39.25%</text>
        <rect x="1315" y="251" width="62" height="28" fill="#f00" />
        <path d="M1309 257l5-4v8z" fill="#f00" />
        <g fill="#fff">
          <text x="1317" y="262">7,090</text>
          <text x="1363" y="277" textAnchor="end">(22.45%)</text>
        </g>
        <g fill="#e1ffe1" stroke="#000">
          <rect x="1307.5" y="257.5" width="35" height="15" />
          <rect x="1307.5" y="273.5" width="35" height="15" />
        </g>
        <text x="1310" y="269">6,900</text>
        <text x="1310" y="285">6,400</text>
      </svg>
      <PaneButtons tags={['L', 'I', 'R']} />
    </section>
  )
}

function VolumeChart() {
  return (
    <section className="relative border-t border-[#808080]">
      <svg viewBox="183 541 1196 40" className="block w-full" fontSize="12" shapeRendering="crispEdges">
        <rect x="183" y="541" width="1124" height="40" fill="#fff" />
        {monthLines.map(x => <rect key={x} x={x} y="542" width="1" height="38" fill="#e4e4e4" />)}
        <rect x="184" y="569" width="1123" height="1" fill="#e4e4e4" />
        {Array.from({ length: 169 }, (_, i) => (
          <rect key={i} x={Math.round(184 + i * 6.37)} y="579" width="5" height="1" fill={(i * 5) % 7 < 3 ? NAVY : RED} />
        ))}
        {volumes.map(([x, y, up]) => <rect key={x} x={x - 3} y={y} width="6" height={580 - y} fill={up ? RED : NAVY} />)}
        <g fill="none">
          <path d="M722 577L730 574H748L753 577M1160 577L1170 574H1188L1200 577L1215 576L1225 573L1237 570H1255L1263 567" stroke="#55a500" />
          <path d="M730 577H845M1160 577H1217L1240 576L1250 574L1263 572" stroke="#1882dc" />
          <path d="M185 578.500H1267" stroke="#7d1450" />
        </g>
        <Legend x={195} y={551} color="#000" text="거래량" />
        <Legend x={243} y={551} color="#55a500" text="거래이평 5" />
        <Legend x={315} y={551} color="#1882dc" text="20" />
        <Legend x={339} y={551} color="#0000c8" text="60" />
        <Legend x={363} y={551} color="#7d1450" text="120" />
        <AxisColumn top={541} height={40} />
        <path d="M1308 559.500h2M1308 564.500h2M1308 569.500h4M1308 574.500h2" stroke="#c0c0c0" />
        <text x="1360" y="573" textAnchor="end">20,000K</text>
      </svg>
      <PaneButtons tags={['L', 'I']} close />
    </section>
  )
}

function RsiChart() {
  return (
    <section className="relative border-t border-[#808080]">
      <svg viewBox="183 582 1196 103" className="block w-full" fontSize="12" shapeRendering="crispEdges">
        <defs>
          <clipPath id="over"><rect x="183" y="582" width="1124" height="40" /></clipPath>
          <clipPath id="under"><rect x="183" y="658" width="1124" height="27" /></clipPath>
        </defs>
        <rect x="183" y="582" width="1124" height="103" fill="#fff" />
        {monthLines.map(x => <rect key={x} x={x} y="583" width="1" height="101" fill="#e4e4e4" />)}
        {[618, 639, 661, 683].map(y => <rect key={y} x="184" y={y} width="1123" height="1" fill="#e4e4e4" />)}
        <polygon points={`186,622 ${rsi} 1264,622`} fill="#ff99cc" clipPath="url(#over)" />
        <polygon points={`186,658 ${rsi} 1264,658`} fill="#99ccff" clipPath="url(#under)" />
        <text x="184" y="619" fill="#ff99cc">70.00</text>
        <text x="184" y="655" fill="#99ccff">30.00</text>
        <rect x="184" y="622" width="1121" height="1" fill="#f0f" />
        <rect x="184" y="657" width="1121" height="1" fill="#f0f" />
        <polyline points={rsi} fill="none" stroke="#ff6a1e" />
        <polyline points={signal} fill="none" stroke="#2f6bf5" />
        <Legend x={195} y={592} color="#ff6a1e" text="RSI(14,6)" />
        <Legend x={261} y={592} color="#2f6bf5" text="Signal" />
        <AxisColumn top={582} height={103} />
        {[['75.00', 617], ['50.00', 638], ['25.00', 660], ['0.00', 678]].map(([t, y]) => (
          <text key={t} x="1349" y={Number(y) + 4} textAnchor="end">{t}</text>
        ))}
        <path d="M1308 607.500h2M1308 618.500h4M1308 628.500h2M1308 639.500h4M1308 650.500h2M1308 661.500h4M1308 672.500h2M1308 683.500h4" stroke="#c0c0c0" />
      </svg>
      <PaneButtons tags={['L', 'I']} close />
    </section>
  )
}

function TimeAxis() {
  const labels: [number, string][] = [[185, '2024/05'], [293, '06'], [414, '07'], [561, '08'], [695, '09'], [809, '10'], [937, '11'], [1071, '12'], [1198, '2025/01']]
  return (
    <svg viewBox="183 685 1196 17" className="block w-full bg-[#efefef]" fontSize="12" shapeRendering="crispEdges">
      <rect x="183" y="685" width="1196" height="1" fill="#c0c0c0" />
      <rect x="1307" y="685" width="1" height="17" fill="#c0c0c0" />
      {labels.map(([x, t]) => (
        <g key={x}>
          <rect x={x - 1} y="686" width="1" height="6" fill="#c0c0c0" />
          <text x={x} y="698" fontWeight={t.length > 2 ? 700 : 400}>{t}</text>
        </g>
      ))}
      <text x="1317" y="698">01/21</text>
    </svg>
  )
}

const footTools: [string, ReactNode][] = [
  ['축소', <Icon d="M12.500 7a5.500 5.500 0 1 1-11 0a5.500 5.500 0 0 1 11 0M4 7h6" />],
  ['확대', <Icon d="M12.500 7a5.500 5.500 0 1 1-11 0a5.500 5.500 0 0 1 11 0M4 7h6M7 4v6" />],
  ['글자', <Icon d="M3.500 12L7 2.500L10.500 12M4.500 9h5" />],
  ['설정', <Gear />],
  ['도구', <Icon d="M2.500 2.500h3v-1h3v1h4v3h-3l-1-1v8h-3v-8l-1 1h-2z" />],
  ['삭제', <Icon d="M4.500 7V2.500h8v8H8M6.500 4.500h4M8 6.500h3M1.500 7.500l5 5M6.500 7.500l-5 5" />],
  ['표', <Icon size={12} d="M1.500 2.500h11v9h-11zM1.500 4.500h11M4 6.500h2M4 9h2M8 6.500h2M8 9h2M7 4.500v7" />],
  ['차트', <Icon size={12} d="M1.500 1.500h11v11h-11zM1.500 9.500h11M5 9.500v3M9 9.500v3"><path d="M3 7l3-2l2 1l3-3" stroke="#d00" /></Icon>],
  ['십자선', <Icon size={12} d="M1 7.500h12M7.500 1v12" />],
  ['복사', <Icon d="M4.500 5V2.500h8v6H10M1.500 5.500h8v7h-8zM1.500 6.500h8"><path d="M3 10l2-1l1 1l2-2" stroke="#d00" /></Icon>],
  ['전체', <Icon d="M4.500 4.500h5v5h-5zM1.500 4V1.500H4M10 1.500h2.500V4M12.500 10v2.500H10M4 12.500H1.500V10M2 2l2.500 2.500M12 2L9.500 4.500M2 12l2.500-2.500M12 12L9.500 9.500" />],
]

function ScrollRow() {
  return (
    <div className="flex h-[15px] items-stretch border-t border-[#c8c8c8] bg-[#f8f8f8] text-[#333]">
      <button type="button" aria-label="왼쪽" className="flex w-[17px] items-center justify-center border-r-2 border-b-2 border-[#777] bg-[#efefef]"><svg width="4" height="6"><path d="M4 0v6L0 3z" /></svg></button>
      <div className="flex flex-1 justify-end bg-[#f6f6f6]">
        <div className="w-[50px] border-r-2 border-b-2 border-[#888] bg-[#efefef]" />
      </div>
      <button type="button" aria-label="오른쪽" className="flex w-4 items-center justify-center border-r-2 border-b-2 border-[#777] bg-[#efefef]"><svg width="4" height="6"><path d="M0 0v6l4-3z" /></svg></button>
      <div className="flex items-center">
        <button type="button" aria-label="처음" className="flex w-4 justify-center"><Icon size={10} d="M2 2v10"><path d="M12 2v10L5 7z" fill="currentColor" /></Icon></button>
        <button type="button" aria-label="일시정지" className="flex w-4 justify-center"><Icon size={10} sw={2} d="M5 2v10M9 2v10" /></button>
        <button type="button" aria-label="끝" className="flex w-4 justify-center"><Icon size={10} d="M12 2v10"><path d="M2 2v10l7-5z" fill="currentColor" /></Icon></button>
      </div>
      <div className="mx-1 flex w-[62px] flex-col justify-between pt-px">
        <input type="range" aria-label="배율" defaultValue={6} className="h-[8px] w-full appearance-none bg-[linear-gradient(#555,#555)] bg-[length:100%_1px] bg-center bg-no-repeat [&::-webkit-slider-thumb]:h-[8px] [&::-webkit-slider-thumb]:w-[5px] [&::-webkit-slider-thumb]:appearance-none [&::-webkit-slider-thumb]:border [&::-webkit-slider-thumb]:border-black [&::-webkit-slider-thumb]:bg-white" />
        <span className="h-[3px] bg-[repeating-linear-gradient(90deg,#000_0_1px,transparent_1px_4px)]" />
      </div>
      <div className="flex items-center">
        {footTools.map(([label, icon], i) => (
          <button key={label} type="button" aria-label={label} className={clsx('flex h-full w-4 items-center justify-center', (i === 6 || i === 8) && 'border border-[#bbb]')}>{icon}</button>
        ))}
      </div>
    </div>
  )
}

export default function App() {
  return (
    <div className="flex min-h-screen flex-col border-r border-b border-[#6a6a6a] bg-[#dddbd5] [font-family:'Liberation_Sans','Noto_Sans_CJK_KR',sans-serif]">
      <TitleBar />
      <Toolbar />
      <div className="flex flex-1 items-stretch gap-[6px] pr-[7px] pb-[6px] pl-[6px]">
        <Sidebar />
        <main className="min-w-0 flex-1 self-start border border-[#b8b8b8]">
          <QuoteRow />
          <PriceChart />
          <VolumeChart />
          <RsiChart />
          <TimeAxis />
          <ScrollRow />
        </main>
        <nav aria-label="도구" className="flex w-7 shrink-0 flex-col self-start border border-[#c4c4c4] bg-[#f9f9f9] text-[#444]">
          <button type="button" aria-label="새로고침" className="flex h-[22px] items-center justify-center"><Icon d="M2.500 8V3.500h8M4.500 1.500l-2 2l2 2M11.500 5.500V10.500h-8M9.500 8.500l2 2l-2 2" /></button>
          <button type="button" aria-label="환경설정" className="flex h-[22px] items-center justify-center"><Gear /></button>
          <div className="border-t border-[#c4c4c4]">
            {sideTools.map((icon, i) => (
              <button key={i} type="button" aria-label={`도구 ${i + 1}`} className={clsx('mx-auto flex h-[22px] w-[22px] items-center justify-center', i === 10 && 'rounded-[4px] border border-[#b4b4b4] bg-[#efefef]')}>
                {icon}
              </button>
            ))}
          </div>
        </nav>
      </div>
    </div>
  )
}
